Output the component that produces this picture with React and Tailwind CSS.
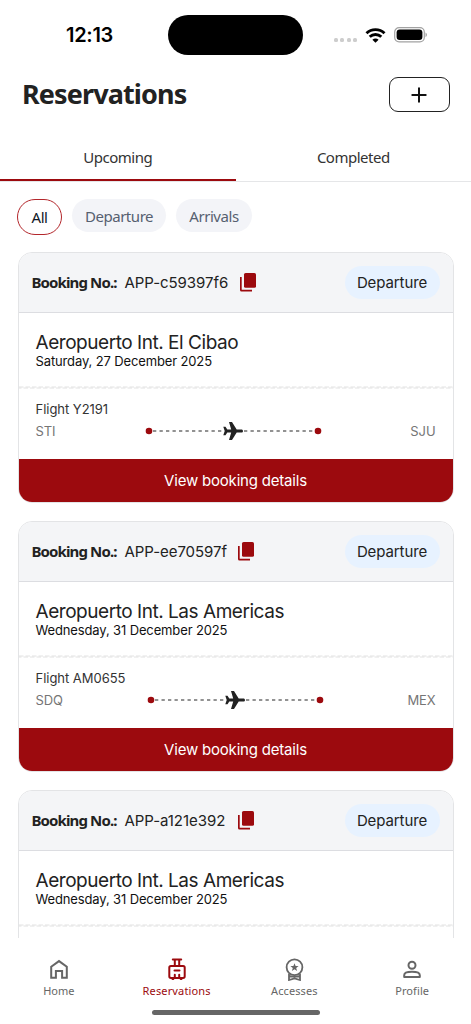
import React, { useState } from 'react';
import clsx from 'clsx';

const bookings = [
  {
    id: 'APP-c59397f6',
    type: 'Departure',
    airport: 'Aeropuerto Int. El Cibao',
    date: 'Saturday, 27 December 2025',
    flight: 'Y2191',
    from: 'STI',
    to: 'SJU',
    idClass: 'w-[103px]',
    pathClass: 'ml-[109px]',
  },
  {
    id: 'APP-ee70597f',
    type: 'Departure',
    airport: 'Aeropuerto Int. Las Americas',
    date: 'Wednesday, 31 December 2025',
    flight: 'AM0655',
    from: 'SDQ',
    to: 'MEX',
    idClass: 'w-[101px]',
    pathClass: 'ml-[111px]',
  },
  {
    id: 'APP-a121e392',
    type: 'Departure',
    airport: 'Aeropuerto Int. Las Americas',
    date: 'Wednesday, 31 December 2025',
    idClass: 'w-[101px]',
  },
];

const HomeIcon = () => (
  <svg viewBox="0 0 24 24" className="size-6" fill="none" stroke="currentColor" strokeWidth="2">
    <path d="M4.2 9.7 12 4.100l7.800 5.600v11h-4.700v-6.800H8.900v6.800H4.200z" />
  </svg>
);

const LuggageIcon = () => (
  <svg viewBox="0 0 24 24" className="size-6" fill="none" stroke="currentColor" strokeWidth="2" strokeLinecap="round" strokeLinejoin="round">
    <path d="M7.800 2.500h8.400M9.800 2.500v6M14.200 2.500v6M9.500 13.500h5M9.800 17.800v3M14.200 17.800v3" />
    <rect x="4.300" y="9" width="15.400" height="11.900" rx="1.600" />
    <path d="M7.500 22h.8M15.700 22h.8" />
  </svg>
);

const BadgeIcon = () => (
  <svg viewBox="0 0 24 24" className="size-6" fill="none" stroke="currentColor" strokeWidth="1.800">
    <circle cx="12.500" cy="10.300" r="7.900" />
    <path d="M7 16.800v6.200l5.500-1.600 5.500 1.600v-6.200M7.200 18.800c3 1 7.600 1 10.600 0" />
    <path d="m12.500 6.200 1.100 2.800 3 .1-2.400 1.900.9 2.900-2.600-1.700-2.600 1.700.9-2.900-2.400-1.900 3-.1z" fill="currentColor" stroke="none" />
  </svg>
);

const ProfileIcon = () => (
  <svg viewBox="0 0 24 24" className="size-6" fill="none" stroke="currentColor" strokeWidth="2">
    <circle cx="12" cy="8.200" r="3.500" />
    <path d="M4.200 20v-1.800c0-2.400 4.300-3.400 7.800-3.400s7.800 1 7.800 3.400V20z" strokeLinejoin="round" />
  </svg>
);

const navItems = [
  { label: 'Home', icon: HomeIcon, text: 'tracking-[0px]' },
  { label: 'Reservations', icon: LuggageIcon, text: 'tracking-[0.14px]' },
  { label: 'Accesses', icon: BadgeIcon, text: 'tracking-[0.1px]' },
  { label: 'Profile', icon: ProfileIcon, text: 'tracking-[0.1px]' },
];

const StatusBar = () => (
  <div className="h-[69px] flex items-start shrink-0">
    <div className="w-[168px] pl-[66px] pt-[22px] text-[20px] leading-[27px] font-semibold tracking-[-0.3px] text-black">12:13</div>
    <div className="mt-[15px] w-[135px] h-[39.5px] rounded-full bg-black" />
    <div className="ml-[31px] pt-[27px] flex items-center">
      <div className="flex gap-[2.4px] mr-2 mt-[10px]">
        {[0, 1, 2, 3].map((i) => (
          <span key={i} className="size-1 rounded-[1.5px] bg-[#cdcdcd]" />
        ))}
      </div>
      <svg width="21" height="15" viewBox="0 0 20 15" fill="none" stroke="#000" strokeWidth="2.9">
        <path d="M1 5.2c5-4.8 13-4.8 18 0M4.2 8.8c3.4-3.1 8.2-3.1 11.6 0" />
        <path d="M6.9 11.7c1.8-1.6 4.4-1.6 6.2 0L10 14.8z" fill="#000" stroke="none" />
      </svg>
      <svg className="ml-2" width="33" height="16" viewBox="0 0 33 16">
        <rect x=".7" y=".7" width="29.6" height="14.2" rx="4.4" fill="none" stroke="#a2a2a2" strokeWidth="1.2" />
        <rect x="2.6" y="2.5" width="25.8" height="10.6" rx="3" fill="#000" />
        <path d="M31.5 5.5v4.6c1.9-.8 1.9-3.8 0-4.6" fill="#a2a2a2" />
      </svg>
    </div>
  </div>
);

const FlightPath = ({ className }) => (
  <svg className={clsx('shrink-0', className)} width="177" height="20" viewBox="0 0 177 20">
    <path d="M8 10h161" stroke="#6f6f6f" strokeWidth="1.6" strokeDasharray="3.3 3.2" />
    <circle cx="4" cy="10" r="3.3" fill="#9c0a0e" />
    <circle cx="173" cy="10" r="3.3" fill="#9c0a0e" />
    <rect x="78" y="5" width="20" height="10" fill="#fff" />
    <path
      d="M98 10c0-.9-.7-1.6-1.6-1.6h-4.7L87 .9h-3l2.200 7.500h-3.900l-1.800-2.700h-2.200L79.700 10l-1.400 4.300h2.200l1.800-2.700h3.900L84 19.100h3l4.700-7.500h4.700c.9 0 1.600-.7 1.600-1.600"
      fill="#222"
    />
  </svg>
);

const BookingCard = ({ booking }) => (
  <div className="h-[251px] shrink-0 flex flex-col rounded-[14px] border border-[#e3e4e6] bg-white overflow-hidden">
    <div className="h-[60px] shrink-0 flex items-center px-[13px] bg-[#f4f5f7] border-b border-[#dcdde1]">
      <span className="w-[93px] whitespace-nowrap font-['Noto_Sans'] text-[15px] font-bold tracking-[-0.88px] text-[#222]">Booking No.:</span>
      <span className={clsx('pt-px whitespace-nowrap text-[15px] tracking-[-0.05px] text-[#222]', booking.idClass)}>{booking.id}</span>
      <svg className="ml-3" width="16" height="19" viewBox="0 0 16 19" fill="#9c0a0e">
        <rect x="4" y="0" width="12" height="14.8" rx="1.6" />
        <path d="M0 4h1.700v12.700H12v1.700H1.500A1.500 1.500 0 0 1 0 16.900z" />
      </svg>
      <span className="ml-auto flex h-[33px] w-[95px] items-center justify-center rounded-full bg-[#e7f2ff] pt-px text-[15px] tracking-[-0.1px] text-[#222]">{booking.type}</span>
    </div>
    <div className="h-[73px] shrink-0 pl-[17px] pt-[18px]">
      <p className="text-[19px] leading-[24px] tracking-[-0.46px] text-[#222]">{booking.airport}</p>
      <p className="text-[13px] leading-[13px] tracking-[-0.13px] text-[#111]">{booking.date}</p>
    </div>
    <svg className="h-[3px] w-full shrink-0" preserveAspectRatio="none">
      <path d="M0 1h440" stroke="#e2e2e2" strokeWidth="1" strokeDasharray="4.5 2" />
      <path d="M-2 2h442" stroke="#e2e2e2" strokeWidth="1" strokeDasharray="4.5 2" />
    </svg>
    {booking.flight && (
      <>
        <div className="grow px-[17px] pt-[11px]">
          <p className="text-[13px] leading-[19px] tracking-[-0.03px] text-[#333]">Flight {booking.flight}</p>
          <div className="mt-[2px] flex items-center text-[13px] leading-5 tracking-[-0.1px] text-[#757575]">
            <span className="w-0 whitespace-nowrap">{booking.from}</span>
            <FlightPath className={booking.pathClass} />
            <span className="ml-auto">{booking.to}</span>
          </div>
        </div>
        <button className="h-[43px] shrink-0 bg-[#9c0a0e] pt-px text-[15px] tracking-[-0.2px] text-white">View booking details</button>
      </>
    )}
  </div>
);

const App = () => {
  const [tab, setTab] = useState('Upcoming');
  const [filter, setFilter] = useState('All');

  return (
    <div className="w-[471px] h-[1024px] flex flex-col overflow-hidden bg-white font-['Inter',sans-serif]">
      <StatusBar />

      {/* Title */}
      <header className="h-[64px] shrink-0 flex items-start justify-between pl-[22px] pr-[21.5px] font-['Noto_Sans',sans-serif]">
        <h1 className="pt-[7px] text-[27px] leading-9 font-bold tracking-[-0.88px] text-[#222]">Reservations</h1>
        <button className="mt-2 flex h-[35px] w-[60.5px] items-center justify-center rounded-[9px] border border-[#222]">
          <svg width="16" height="16" viewBox="0 0 16 16" stroke="#111" strokeWidth="2" strokeLinecap="round">
            <path d="M1.3 8h13.4M8 1.3v13.4" />
          </svg>
        </button>
      </header>

      {/* Tabs */}
      <div className="h-[49px] shrink-0 flex border-b border-[#e5e6e8] font-['Noto_Sans',sans-serif]">
        {['Upcoming', 'Completed'].map((name) => (
          <button
            key={name}
            onClick={() => setTab(name)}
            className={clsx(
              'flex-1 border-b-2 pt-[2px] text-[15px] tracking-[-0.5px] text-[#333]',
              tab === name ? 'border-[#9c0a0e]' : 'border-transparent'
            )}
          >
            {name}
          </button>
        ))}
      </div>

      {/* Filters */}
      <div className="h-[70px] shrink-0 flex gap-[10px] pl-[17px] pt-[17px] font-['Noto_Sans',sans-serif] text-[15px]">
        {[
          { name: 'All', size: 'w-[45px]' },
          { name: 'Departure', size: 'w-[94px]' },
          { name: 'Arrivals', size: 'w-[76px]' },
        ].map(({ name, size }) => (
          <button
            key={name}
            onClick={() => setFilter(name)}
            className={clsx(
              'rounded-full tracking-[-0.45px]',
              size,
              filter === name ? 'h-9 border border-[#b3262b] bg-white text-[#111827]' : 'h-[33px] bg-[#f3f4f8] pt-px text-[#566070]'
            )}
          >
            {name}
          </button>
        ))}
      </div>

      {/* Bookings */}
      <main className="flex grow min-h-0 flex-col gap-[18px] overflow-hidden px-[17.5px]">
        {bookings.map((booking) => (
          <BookingCard key={booking.id} booking={booking} />
        ))}
      </main>

      {/* Bottom navigation */}
      <nav className="h-[86px] shrink-0 flex flex-col bg-white font-['Noto_Sans',sans-serif]">
        <div className="flex h-[72px] pt-[19px]">
          {navItems.map(({ label, icon: Icon, text }) => (
            <button
              key={label}
              className={clsx('flex-1 flex flex-col items-center text-[11px]', label === 'Reservations' ? 'text-[#9c0a0e]' : 'text-[#666]')}
            >
              <Icon />
              <span className={clsx('mt-[2px] leading-4', text)}>{label}</span>
            </button>
          ))}
        </div>
        <div className="mx-auto h-[5px] w-[168px] rounded-full bg-[#666]" />
      </nav>
    </div>
  );
};

export default App;
